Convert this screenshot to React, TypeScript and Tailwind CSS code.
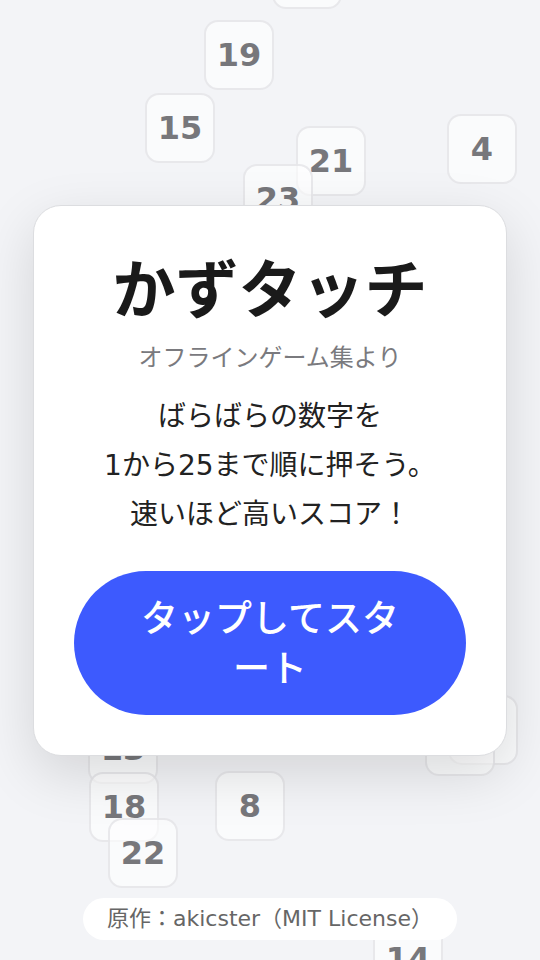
const FONT = "font-['DejaVu_Sans','Noto_Sans_CJK_JP',sans-serif]";

// scattered number tiles behind the start card
const tiles: { n: string; x: number; y: number }[] = [
  { n: "", x: 272, y: -61 },
  { n: "19", x: 204, y: 20 },
  { n: "15", x: 145, y: 93 },
  { n: "4", x: 447, y: 114 },
  { n: "21", x: 296, y: 126 },
  { n: "23", x: 243, y: 164 },
  { n: "6", x: 448, y: 695 },
  { n: "2", x: 425, y: 706 },
  { n: "13", x: 88, y: 714 },
  { n: "8", x: 215, y: 771 },
  { n: "18", x: 89, y: 772 },
  { n: "22", x: 108, y: 818 },
  { n: "14", x: 373, y: 924 },
];

function Tile({ n, x, y }: { n: string; x: number; y: number }) {
  return (
    <div
      className="absolute flex h-[70px] w-[70px] items-center justify-center rounded-[14px] border-2 border-[#dfe0e4]/70 bg-white/60 text-[32px] font-bold text-[#77777b]"
      style={{ left: x, top: y }}
    >
      {n}
    </div>
  );
}

export default function App() {
  return (
    <div
      className={`relative flex h-[960px] w-full items-center justify-center overflow-hidden bg-[#f3f4f7] ${FONT}`}
    >
      {tiles.map((t, i) => (
        <Tile key={i} {...t} />
      ))}

      <div className="relative z-10 flex w-[474px] flex-col items-center rounded-[28px] border border-[#dcdde0] bg-white px-10 pb-10 pt-[48px] text-center shadow-[0_18px_55px_rgba(0,0,0,0.13)]">
        <h1 className="text-[63px] font-bold leading-[74px] text-[#1a1a1a]">
          かずタッチ
        </h1>
        <p className="mt-3 text-[24px] leading-[36px] text-[#7a7a7e]">
          オフラインゲーム集より
        </p>
        <p className="mt-4 text-[28px] leading-[49px] text-[#222]">
          ばらばらの数字を
          <br />
          1から25まで順に押そう。
          <br />
          速いほど高いスコア！
        </p>
        <button
          type="button"
          className="mt-8 w-full rounded-full bg-[#3d5afe] px-14 pb-[20px] pt-[24px] text-[37px] font-medium leading-[50px] text-white"
        >
          タップしてスタート
        </button>
      </div>

      <div className="absolute bottom-5 left-1/2 z-20 -translate-x-1/2 whitespace-nowrap rounded-full bg-white px-6 py-2 text-[22px] leading-[26px] text-[#666]">
        原作：akicster（MIT License）
      </div>
    </div>
  );
}
